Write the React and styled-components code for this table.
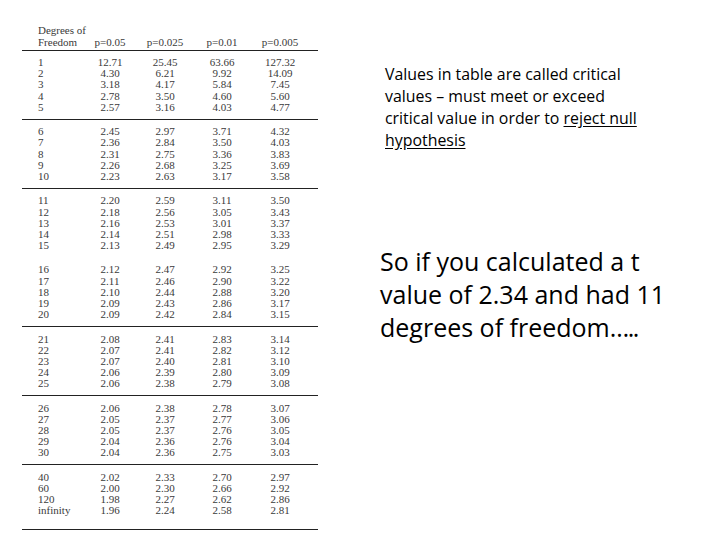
import styled, { createGlobalStyle } from 'styled-components'

const GlobalStyle = createGlobalStyle`
  html, body {
    margin: 0;
    padding: 0;
    background: #ffffff;
  }
  body {
    width: 720px;
    height: 540px;
    overflow: hidden;
  }
`

const Slide = styled.div`
  display: flex;
  flex-direction: row;
  width: 720px;
  height: 540px;
  box-sizing: border-box;
  padding-left: 22px;
  padding-top: 25px;
  background: #fff;
`

const Table = styled.div`
  width: 296px;
  font-family: "Liberation Serif", "DejaVu Serif", serif;
  font-size: 11px;
  color: #3a3a3a;
`

const Row = styled.div`
  display: grid;
  grid-template-columns: 60px 56px 54px 60px 56px 10px;
  align-items: end;
  line-height: 11.1px;
  height: 11.1px;
`

const HeadRow = styled(Row)`
  height: auto;
  line-height: 11.5px;
  padding-bottom: 2px;
  border-bottom: 1.5px solid #222;
`

const Group = styled.div`
  padding: 6.3px 0 ${p => (p.$last ? '13px' : '6.3px')};
  border-bottom: ${p => (p.$ruled ? '1.5px solid #222' : '1.5px solid transparent')};
`

const DfCell = styled.div`
  padding-left: 16px;
  white-space: nowrap;
`

const Cell = styled.div`
  text-align: center;
  white-space: nowrap;
`

const Notes = styled.div`
  display: flex;
  flex-direction: column;
  margin-left: 67px;
  padding-top: 38px;
  color: #000;
`

const SmallNote = styled.p`
  margin: 0;
  font-family: "Open Sans", Lato, sans-serif;
  font-size: 15.9px;
  line-height: 22px;
  white-space: nowrap;
`

const Underlined = styled.span`
  text-decoration: underline;
  text-underline-offset: 2px;
`

const BigNote = styled.p`
  margin: 94px 0 0 -5px;
  font-family: "Open Sans", Lato, sans-serif;
  font-size: 25px;
  line-height: 33px;
  white-space: nowrap;
`

const Dots = styled.span`
  letter-spacing: -1.5px;
`

const groups = [
  { ruled: true, rows: [
    ['1', '12.71', '25.45', '63.66', '127.32'],
    ['2', '4.30', '6.21', '9.92', '14.09'],
    ['3', '3.18', '4.17', '5.84', '7.45'],
    ['4', '2.78', '3.50', '4.60', '5.60'],
    ['5', '2.57', '3.16', '4.03', '4.77'],
  ] },
  { ruled: true, rows: [
    ['6', '2.45', '2.97', '3.71', '4.32'],
    ['7', '2.36', '2.84', '3.50', '4.03'],
    ['8', '2.31', '2.75', '3.36', '3.83'],
    ['9', '2.26', '2.68', '3.25', '3.69'],
    ['10', '2.23', '2.63', '3.17', '3.58'],
  ] },
  { ruled: false, rows: [
    ['11', '2.20', '2.59', '3.11', '3.50'],
    ['12', '2.18', '2.56', '3.05', '3.43'],
    ['13', '2.16', '2.53', '3.01', '3.37'],
    ['14', '2.14', '2.51', '2.98', '3.33'],
    ['15', '2.13', '2.49', '2.95', '3.29'],
  ] },
  { ruled: true, rows: [
    ['16', '2.12', '2.47', '2.92', '3.25'],
    ['17', '2.11', '2.46', '2.90', '3.22'],
    ['18', '2.10', '2.44', '2.88', '3.20'],
    ['19', '2.09', '2.43', '2.86', '3.17'],
    ['20', '2.09', '2.42', '2.84', '3.15'],
  ] },
  { ruled: true, rows: [
    ['21', '2.08', '2.41', '2.83', '3.14'],
    ['22', '2.07', '2.41', '2.82', '3.12'],
    ['23', '2.07', '2.40', '2.81', '3.10'],
    ['24', '2.06', '2.39', '2.80', '3.09'],
    ['25', '2.06', '2.38', '2.79', '3.08'],
  ] },
  { ruled: true, rows: [
    ['26', '2.06', '2.38', '2.78', '3.07'],
    ['27', '2.05', '2.37', '2.77', '3.06'],
    ['28', '2.05', '2.37', '2.76', '3.05'],
    ['29', '2.04', '2.36', '2.76', '3.04'],
    ['30', '2.04', '2.36', '2.75', '3.03'],
  ] },
  { ruled: true, last: true, rows: [
    ['40', '2.02', '2.33', '2.70', '2.97'],
    ['60', '2.00', '2.30', '2.66', '2.92'],
    ['120', '1.98', '2.27', '2.62', '2.86'],
    ['infinity', '1.96', '2.24', '2.58', '2.81'],
  ] },
]

export default function App() {
  return (
    <>
      <GlobalStyle />
      <Slide>
        <Table>
          <HeadRow>
            <DfCell>Degrees of<br />Freedom</DfCell>
            <Cell>p=0.05</Cell>
            <Cell>p=0.025</Cell>
            <Cell>p=0.01</Cell>
            <Cell>p=0.005</Cell>
          </HeadRow>
          {groups.map((g, i) => (
            <Group key={i} $ruled={g.ruled} $last={g.last}>
              {g.rows.map(r => (
                <Row key={r[0]}>
                  <DfCell>{r[0]}</DfCell>
                  <Cell>{r[1]}</Cell>
                  <Cell>{r[2]}</Cell>
                  <Cell>{r[3]}</Cell>
                  <Cell>{r[4]}</Cell>
                </Row>
              ))}
            </Group>
          ))}
        </Table>

        <Notes>
          <SmallNote>
            Values in table are called critical<br />
            values – must meet or exceed<br />
            critical value in order to <Underlined>reject null</Underlined><br />
            <Underlined>hypothesis</Underlined>
          </SmallNote>
          <BigNote>
            So if you calculated a t<br />
            value of 2.34 and had 11<br />
            degrees of freedom<Dots>…..</Dots>
          </BigNote>
        </Notes>
      </Slide>
    </>
  )
}
